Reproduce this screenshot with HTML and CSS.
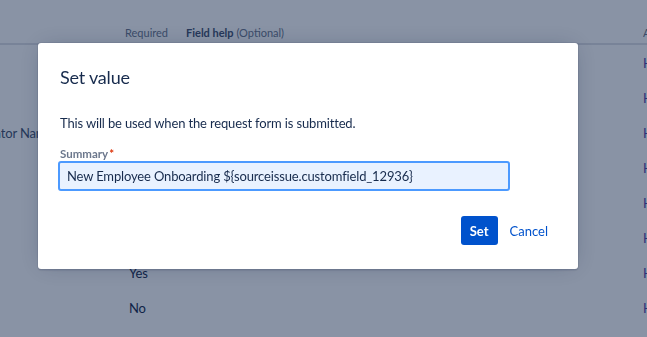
FILE: index.html
```html
<!DOCTYPE html>
<html lang="en">
<head>
    <meta charset="UTF-8">
    <title>Set value</title>
    <link rel="stylesheet" href="styles.css">
</head>
<body>
<div class="page">
    <div class="table">
        <div class="head">
            <div class="cell name"></div>
            <div class="cell req">Required</div>
            <div class="cell help"><b>Field help</b> (Optional)</div>
            <div class="cell act">Actions</div>
        </div>
        <div class="row"><div class="cell name"></div><div class="cell req"></div><div class="cell help"></div><div class="cell act"><a href="#">Hide</a></div></div>
        <div class="row"><div class="cell name"></div><div class="cell req"></div><div class="cell help"></div><div class="cell act"><a href="#">Hide</a></div></div>
        <div class="row"><div class="cell name">Creator Name</div><div class="cell req"></div><div class="cell help"></div><div class="cell act"><a href="#">Hide</a></div></div>
        <div class="row"><div class="cell name"></div><div class="cell req"></div><div class="cell help"></div><div class="cell act"><a href="#">Hide</a></div></div>
        <div class="row"><div class="cell name"></div><div class="cell req"></div><div class="cell help"></div><div class="cell act"><a href="#">Hide</a></div></div>
        <div class="row"><div class="cell name"></div><div class="cell req"></div><div class="cell help"></div><div class="cell act"><a href="#">Hide</a></div></div>
        <div class="row"><div class="cell name"></div><div class="cell req">Yes</div><div class="cell help"></div><div class="cell act"><a href="#">Hide</a></div></div>
        <div class="row"><div class="cell name"></div><div class="cell req">No</div><div class="cell help"></div><div class="cell act"><a href="#">Hide</a></div></div>
        <div class="row"><div class="cell name"></div><div class="cell req"></div><div class="cell help"></div><div class="cell act"><a href="#">Hide</a></div></div>
    </div>
</div>

<div class="blanket"></div>

<div class="modal">
    <div class="modal-header">
        <h1 class="modal-title">Set value</h1>
    </div>
    <div class="modal-body">
        <p class="desc">This will be used when the request form is submitted.</p>
        <label class="label" for="summary">Summary<span class="req-star">*</span></label>
        <input class="text-field" id="summary" type="text" value="New Employee Onboarding ${sourceissue.customfield_12936}">
    </div>
    <div class="modal-footer">
        <button class="btn btn-primary">Set</button>
        <button class="btn btn-link">Cancel</button>
    </div>
</div>
</body>
</html>
```

FILE: styles.css
```css
html, body {
  margin: 0;
  height: 100%;
  overflow: hidden;
  font-family: Lato, "Noto Sans", sans-serif;
  font-size: 13px;
  letter-spacing: -0.15px;
  color: #172b4d;
  background: #fff;
}

.page {
  margin-left: -25px;
  padding-top: 22px;
}

.head, .row {
  display: grid;
  grid-template-columns: 150px 61px 457px 60px;
}
.head {
  height: 21px;
  border-bottom: 2px solid #dfe1e6;
  font-size: 11px;
  letter-spacing: 0;
  color: #6b778c;
  align-items: center;
}
.head b {
  color: #42526e;
  font-weight: 700;
}
.row {
  height: 35px;
  align-items: center;
}
.cell {
  white-space: nowrap;
  overflow: hidden;
}
.row .name {
  color: #42526e;
}
.row .req {
  padding-left: 4px;
  color: #172b4d;
}
.cell a {
  color: #5243aa;
  text-decoration: none;
}

.blanket {
  position: fixed;
  inset: 0;
  background: rgba(9, 30, 66, 0.48);
}

.modal {
  position: absolute;
  left: 38px;
  top: 43px;
  width: 540px;
  background: #fff;
  border-radius: 3px;
  box-shadow: 0 0 0 1px rgba(9, 30, 66, 0.08), 0 2px 1px rgba(9, 30, 66, 0.08), 0 0 20px -6px rgba(9, 30, 66, 0.31);
}
.modal-header {
  padding: 22px 22px 0;
}
.modal-title {
  margin: 0;
  font-size: 18px;
  font-weight: 400;
  line-height: 24px;
  letter-spacing: -0.2px;
  color: #172b4d;
}
.modal-body {
  padding: 24px 20px 0;
}
.desc {
  margin: 0 0 0 2px;
  line-height: 20px;
}
.label {
  display: block;
  margin: 14px 0 0 2px;
  font-size: 11.5px;
  line-height: 14px;
  font-weight: 700;
  letter-spacing: 0;
  color: #6b778c;
}
.req-star {
  color: #de350b;
  padding-left: 1px;
}
.text-field {
  display: block;
  box-sizing: border-box;
  width: 452px;
  height: 30px;
  margin: 0;
  padding: 0 7px;
  border: 2px solid #4c9aff;
  border-radius: 3px;
  background: #e9f2ff;
  font: inherit;
  letter-spacing: inherit;
  color: #172b4d;
  outline: none;
}
.modal-footer {
  display: flex;
  justify-content: flex-end;
  gap: 4px;
  padding: 25px 22px 24px;
}
.btn {
  height: 29px;
  padding: 0 8px;
  border: none;
  border-radius: 3px;
  font: inherit;
  letter-spacing: 0;
  cursor: pointer;
}
.btn-primary {
  padding: 0 9px;
  background: #0052cc;
  color: #fff;
  font-weight: 700;
}
.btn-link {
  background: none;
  color: #0052cc;
}
```
